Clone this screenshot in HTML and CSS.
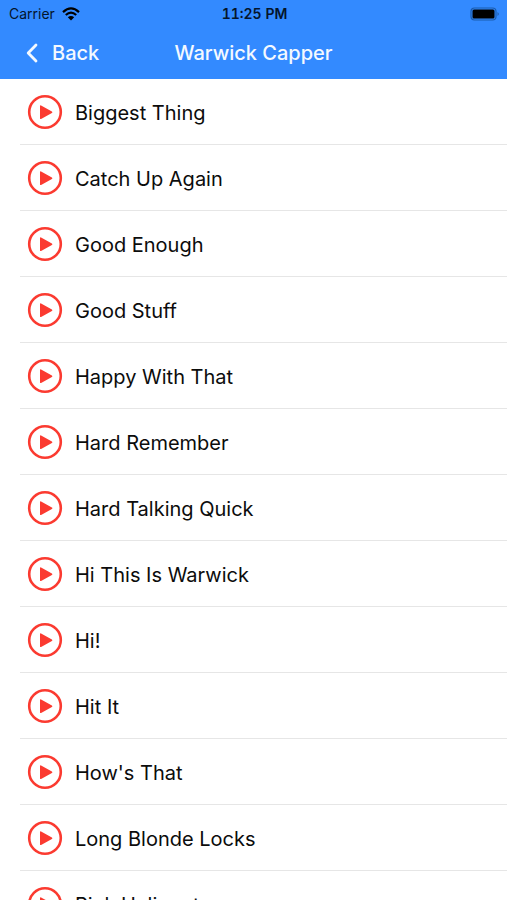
FILE: index.html
```html
<!DOCTYPE html>
<html lang="en">
<head>
<meta charset="utf-8">
<meta name="viewport" content="width=device-width, initial-scale=1">
<title>Warwick Capper</title>
<link rel="stylesheet" href="styles.css">
</head>
<body>
<svg class="symbols" aria-hidden="true">
  <symbol id="play" viewBox="0 0 36 36">
    <circle cx="18" cy="18" r="15.8" fill="none" stroke="currentColor" stroke-width="2.6"/>
    <path d="M13 12.2v12q0 1.3 1.1.7l10.8-6q1.1-.7 0-1.4l-10.8-6.1q-1.1-.6-1.1.8z" fill="currentColor"/>
  </symbol>
</svg>
<header class="header">
  <div class="status">
    <div class="carrier">
      <span>Carrier</span>
      <svg class="wifi" viewBox="0 0 18 14" aria-hidden="true">
        <path d="M1 5.1Q9-2.3 17 5.1M3.8 8Q9 3.2 14.2 8" fill="none" stroke="currentColor" stroke-width="2.2"/>
        <path d="M9 13.6L5.8 10.3Q9 7.7 12.2 10.3z" fill="currentColor"/>
      </svg>
    </div>
    <time class="clock">11:25 PM</time>
    <svg class="battery" viewBox="0 0 30 14" aria-hidden="true">
      <rect x="1" y="1" width="25" height="12" rx="3.5" fill="none" stroke="#1b5cad" stroke-width="1.2"/>
      <rect x="2.5" y="2.5" width="22" height="9" rx="1.5" fill="currentColor"/>
      <path d="M27.6 5q2 2 0 4z" fill="#1b4f92"/>
    </svg>
  </div>
  <nav class="nav">
    <a class="back" href="#">
      <svg class="chevron" viewBox="0 0 12 20" aria-hidden="true">
        <path d="M10 2L2.2 10L10 18" fill="none" stroke="currentColor" stroke-width="2.8" stroke-linecap="round" stroke-linejoin="round"/>
      </svg>
      <span>Back</span>
    </a>
    <h1 class="title">Warwick Capper</h1>
  </nav>
</header>
<main class="content">
  <ul class="list">
    <li class="item"><button class="sound" type="button"><svg class="play"><use href="#play"/></svg><span class="name">Biggest Thing</span></button></li>
    <li class="item"><button class="sound" type="button"><svg class="play"><use href="#play"/></svg><span class="name">Catch Up Again</span></button></li>
    <li class="item"><button class="sound" type="button"><svg class="play"><use href="#play"/></svg><span class="name">Good Enough</span></button></li>
    <li class="item"><button class="sound" type="button"><svg class="play"><use href="#play"/></svg><span class="name">Good Stuff</span></button></li>
    <li class="item"><button class="sound" type="button"><svg class="play"><use href="#play"/></svg><span class="name">Happy With That</span></button></li>
    <li class="item"><button class="sound" type="button"><svg class="play"><use href="#play"/></svg><span class="name">Hard Remember</span></button></li>
    <li class="item"><button class="sound" type="button"><svg class="play"><use href="#play"/></svg><span class="name">Hard Talking Quick</span></button></li>
    <li class="item"><button class="sound" type="button"><svg class="play"><use href="#play"/></svg><span class="name">Hi This Is Warwick</span></button></li>
    <li class="item"><button class="sound" type="button"><svg class="play"><use href="#play"/></svg><span class="name">Hi!</span></button></li>
    <li class="item"><button class="sound" type="button"><svg class="play"><use href="#play"/></svg><span class="name">Hit It</span></button></li>
    <li class="item"><button class="sound" type="button"><svg class="play"><use href="#play"/></svg><span class="name">How's That</span></button></li>
    <li class="item"><button class="sound" type="button"><svg class="play"><use href="#play"/></svg><span class="name">Long Blonde Locks</span></button></li>
    <li class="item"><button class="sound" type="button"><svg class="play"><use href="#play"/></svg><span class="name">Pink Helicopter</span></button></li>
  </ul>
</main>
</body>
</html>
```
FILE: styles.css
```css
* { box-sizing: border-box; }

body {
  margin: 0;
  height: 100vh;
  display: flex;
  flex-direction: column;
  background: #fff;
  color: #0c0c0c;
  font-family: Inter, "Liberation Sans", sans-serif;
}

.symbols { display: none; }

.header {
  flex: none;
  background: #338aff;
}

.status {
  display: grid;
  grid-template-columns: 1fr auto 1fr;
  align-items: center;
  height: 27px;
  padding: 0 7px 0 9px;
  color: #04152c;
  font-size: 14px;
}

.carrier {
  display: flex;
  align-items: center;
  gap: 7px;
}

.wifi {
  width: 18px;
  height: 14px;
  color: #000;
}

.clock {
  font-weight: 600;
  font-variant-numeric: tabular-nums;
}

.battery {
  justify-self: end;
  width: 30px;
  height: 14px;
  color: #000;
}

.nav {
  display: grid;
  grid-template-columns: 1fr auto 1fr;
  align-items: center;
  height: 52px;
  color: #f4f9ff;
}

.back {
  display: flex;
  align-items: center;
  gap: 14px;
  padding-left: 26px;
  color: inherit;
  font-size: 20px;
  font-weight: 500;
  text-decoration: none;
}

.chevron {
  width: 12px;
  height: 20px;
}

.title {
  margin: 0;
  font-size: 20px;
  font-weight: 500;
}

.content {
  flex: 1;
  min-height: 0;
  overflow-y: auto;
  scrollbar-width: none;
}

.list {
  margin: 0;
  padding: 0 0 0 20px;
  list-style: none;
}

.item { border-bottom: 1px solid #e6e6e6; }

.sound {
  display: flex;
  align-items: center;
  gap: 12px;
  width: 100%;
  height: 65px;
  padding: 0 7px;
  border: 0;
  background: none;
  color: inherit;
  font: inherit;
  font-size: 20px;
  text-align: left;
}

.name { padding-top: 2px; }

.play {
  flex: none;
  width: 36px;
  height: 36px;
  color: #fb3a30;
}
```
